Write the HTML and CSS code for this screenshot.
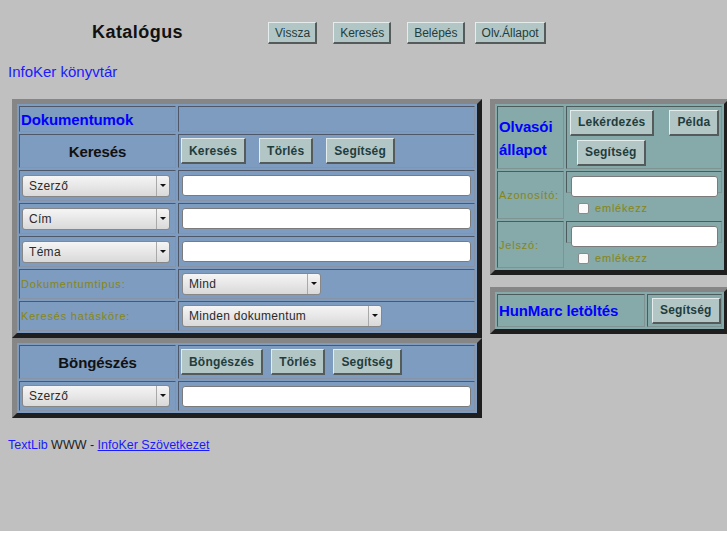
FILE: index.html
```html
<!DOCTYPE html>
<html lang="hu">
<head>
<meta charset="utf-8">
<title>Katalógus</title>
<link rel="stylesheet" href="styles.css">
</head>
<body>
<div class="page">
  <header class="top">
    <h1 class="title">Katalógus</h1>
    <nav class="nav">
      <button class="btn sp">Vissza</button>
      <button class="btn sp">Keresés</button>
      <button class="btn sp2">Belépés</button>
      <button class="btn">Olv.Állapot</button>
    </nav>
  </header>
  <a class="home" href="#">InfoKer könyvtár</a>

  <div class="main">
    <div class="leftcol">
      <div class="panel blue search">
        <div class="cell pl1"><span class="lbl-blue">Dokumentumok</span></div>
        <div class="cell"></div>

        <div class="cell center"><span class="lbl-bold">Keresés</span></div>
        <div class="cell btns g13"><button class="btn b">Keresés</button><button class="btn b">Törlés</button><button class="btn b">Segítség</button></div>

        <div class="cell pl2"><span class="sel w148"><select><option>Szerző</option></select></span></div>
        <div class="cell pl3"><input class="txt w289" type="text"></div>

        <div class="cell pl2"><span class="sel w148"><select><option>Cím</option></select></span></div>
        <div class="cell pl3"><input class="txt w289" type="text"></div>

        <div class="cell pl2"><span class="sel w148"><select><option>Téma</option></select></span></div>
        <div class="cell pl3"><input class="txt w289" type="text"></div>

        <div class="cell pl1"><span class="lbl-olive">Dokumentumtipus:</span></div>
        <div class="cell pl3"><span class="sel w139"><select><option>Mind</option></select></span></div>

        <div class="cell pl1"><span class="lbl-olive">Keresés hatásköre:</span></div>
        <div class="cell pl3"><span class="sel w200"><select><option>Minden dokumentum</option></select></span></div>
      </div>

      <div class="panel blue browse">
        <div class="cell center"><span class="lbl-bold">Böngészés</span></div>
        <div class="cell btns g8"><button class="btn b">Böngészés</button><button class="btn b">Törlés</button><button class="btn b">Segítség</button></div>

        <div class="cell pl2"><span class="sel w148"><select><option>Szerző</option></select></span></div>
        <div class="cell pl3"><input class="txt w289" type="text"></div>
      </div>
    </div>

    <div class="rightcol">
      <div class="panel teal reader">
        <div class="cell pl1"><span class="lbl-blue tall">Olvasói<br>állapot</span></div>
        <div class="cell col">
          <div class="brow first"><button class="btn b">Lekérdezés</button><button class="btn b">Példa</button></div>
          <div class="brow second"><button class="btn b">Segítség</button></div>
        </div>

        <div class="cell pl1"><span class="lbl-olive">Azonosító:</span></div>
        <div class="cell col top">
          <input class="txt w147" type="text">
          <label class="remember"><span class="chk"></span><span class="lbl-olive">emlékezz</span></label>
        </div>

        <div class="cell pl1"><span class="lbl-olive">Jelszó:</span></div>
        <div class="cell col top">
          <input class="txt w147" type="password">
          <label class="remember"><span class="chk"></span><span class="lbl-olive">emlékezz</span></label>
        </div>
      </div>

      <div class="panel teal hunmarc">
        <div class="cell pl1"><span class="lbl-blue">HunMarc letöltés</span></div>
        <div class="cell pl4"><button class="btn b">Segítség</button></div>
      </div>
    </div>
  </div>

  <footer class="foot">
    <a class="plain" href="#">TextLib</a> WWW - <a class="ul" href="#">InfoKer Szövetkezet</a>
  </footer>
</div>
</body>
</html>
```

FILE: styles.css
```css
html {
  background: #ffffff;
}
body {
  margin: 0;
  overflow: hidden;
  font-family: "Liberation Sans", Arial, Helvetica, sans-serif;
}
.page {
  box-sizing: border-box;
  width: 727px;
  height: 531px;
  padding: 0 8px;
  background: #c0c0c0;
  overflow: hidden;
}

/* header */
.top {
  display: flex;
  align-items: center;
  padding-top: 22px;
  height: 22px;
}
.title {
  margin: 0 0 0 84px;
  width: 176px;
  padding-bottom: 2px;
  font-size: 18px;
  line-height: 19px;
  letter-spacing: 0.45px;
  font-weight: bold;
  color: #111;
}
.nav {
  display: flex;
  align-items: center;
}
.nav .sp { margin-right: 16px; }
.nav .sp2 { margin-right: 10px; }

.home {
  display: block;
  margin-top: 19px;
  font-size: 15px;
  line-height: 18px;
  color: #1a1aff;
  text-decoration: none;
}

/* buttons */
.btn {
  box-sizing: border-box;
  flex: none;
  margin: 0;
  height: 22px;
  padding: 0 5px 0 6px;
  border-style: solid;
  border-width: 1px 2px 2px 1px;
  border-color: #e4ecec #555a5a #555a5a #e4ecec;
  background: #b3c6c6;
  color: #1f3d3d;
  font-family: "Liberation Sans", Arial, sans-serif;
  font-size: 12px;
  line-height: 14px;
  white-space: nowrap;
  cursor: pointer;
}
.btn.b {
  height: 26px;
  padding: 0 7px 0 7px;
  font-weight: bold;
  letter-spacing: 0.2px;
}

/* layout */
.main {
  display: flex;
  align-items: flex-start;
  gap: 8px;
  margin-top: 18px;
}
.leftcol {
  margin-left: 4px;
  display: flex;
  flex-direction: column;
}
.rightcol {
  display: flex;
  flex-direction: column;
  gap: 12px;
}

/* bevelled table panels */
.panel {
  display: grid;
  gap: 2px;
  padding: 2px;
  border-style: solid;
  border-width: 5px;
  border-color: #868686 #1e1e1e #1e1e1e #868686;
}
.panel.blue { background: #7e9bc0; }
.panel.teal { background: #86a9a9; }

.search {
  grid-template-columns: 157px 297px;
  grid-template-rows: 26px 34px 31px 31px 31px 30px 30px;
}
.browse {
  grid-template-columns: 157px 297px;
  grid-template-rows: 34px 30px;
}
.reader {
  grid-template-columns: 67px 156px;
  grid-template-rows: 63px 48px 47px;
}
.hunmarc {
  grid-template-columns: 148px 75px;
  grid-template-rows: 33px;
}

.cell {
  box-sizing: border-box;
  display: flex;
  align-items: center;
  min-width: 0;
  border: 1px solid;
  border-color: #4f5868 #8793a6 #8793a6 #4f5868;
}
.teal .cell {
  border-color: #4c5c5c #7f9393 #7f9393 #4c5c5c;
}
.cell.center { justify-content: center; }
.cell.pl1 { padding-left: 1px; }
.cell.pl2 { padding-left: 2px; }
.cell.pl3 { padding-left: 3px; }
.cell.pl4 { padding-left: 4px; }
.cell.btns { padding-left: 2px; }
.cell.g13 { gap: 13px; }
.cell.g8 { gap: 8px; }

.cell.col {
  flex-direction: column;
  align-items: flex-start;
  justify-content: center;
}
.cell.col.top {
  justify-content: flex-start;
  padding-top: 4px;
}
.brow {
  display: flex;
}
.brow.first {
  gap: 15px;
  margin-left: 3px;
}
.brow.second {
  margin-top: 4px;
  margin-left: 10px;
}

/* labels */
.lbl-blue {
  font-size: 15px;
  font-weight: bold;
  color: #0000ff;
  letter-spacing: -0.1px;
}
.lbl-blue.tall { line-height: 23px; }
.lbl-bold {
  font-size: 15px;
  font-weight: bold;
  color: #111;
  letter-spacing: -0.1px;
}
.lbl-olive {
  font-size: 11px;
  line-height: 12px;
  letter-spacing: 0.8px;
  color: #868616;
}

/* inputs */
.txt {
  box-sizing: border-box;
  flex: none;
  margin: 0;
  height: 21px;
  border: 1px solid #7b7b7b;
  border-radius: 3px;
  background: #ffffff;
  padding: 0 4px;
  font: 12px "Liberation Sans", Arial, sans-serif;
}
.w289 { width: 289px; }
.w147 { width: 147px; margin-left: 4px; }

.sel {
  position: relative;
  display: inline-block;
  height: 22px;
}
.w148 { width: 148px; }
.w139 { width: 139px; }
.w200 { width: 200px; }
.sel select {
  appearance: none;
  -webkit-appearance: none;
  box-sizing: border-box;
  margin: 0;
  width: 100%;
  height: 100%;
  padding: 0 16px 0 6px;
  border: 1px solid #878787;
  border-radius: 3px;
  background: linear-gradient(#f5f5f5, #d9d9d9);
  color: #2a2a2a;
  font: 12px "Liberation Sans", Arial, sans-serif;
  letter-spacing: 0.3px;
}
.sel::before {
  content: "";
  position: absolute;
  right: 13px;
  top: 1px;
  bottom: 1px;
  width: 1px;
  background: #a9a9a9;
  pointer-events: none;
}
.sel::after {
  content: "";
  position: absolute;
  right: 4px;
  top: 9px;
  border-left: 3px solid transparent;
  border-right: 3px solid transparent;
  border-top: 3px solid #111;
  pointer-events: none;
}

/* remember checkbox */
.remember {
  display: flex;
  align-items: center;
  flex: none;
  height: 12px;
  margin-top: 5px;
  margin-left: 11px;
}
.chk {
  box-sizing: border-box;
  flex: none;
  width: 11px;
  height: 11px;
  border: 1px solid #8a8a8a;
  border-radius: 2px;
  background: #fafafa;
  margin-right: 6px;
}

/* footer */
.foot {
  margin-top: 20px;
  font-size: 12.5px;
  line-height: 15px;
  color: #222;
}
.foot a.plain {
  color: #1a1aff;
  text-decoration: none;
}
.foot a.ul {
  color: #1a1aff;
  text-decoration: underline;
}
```
